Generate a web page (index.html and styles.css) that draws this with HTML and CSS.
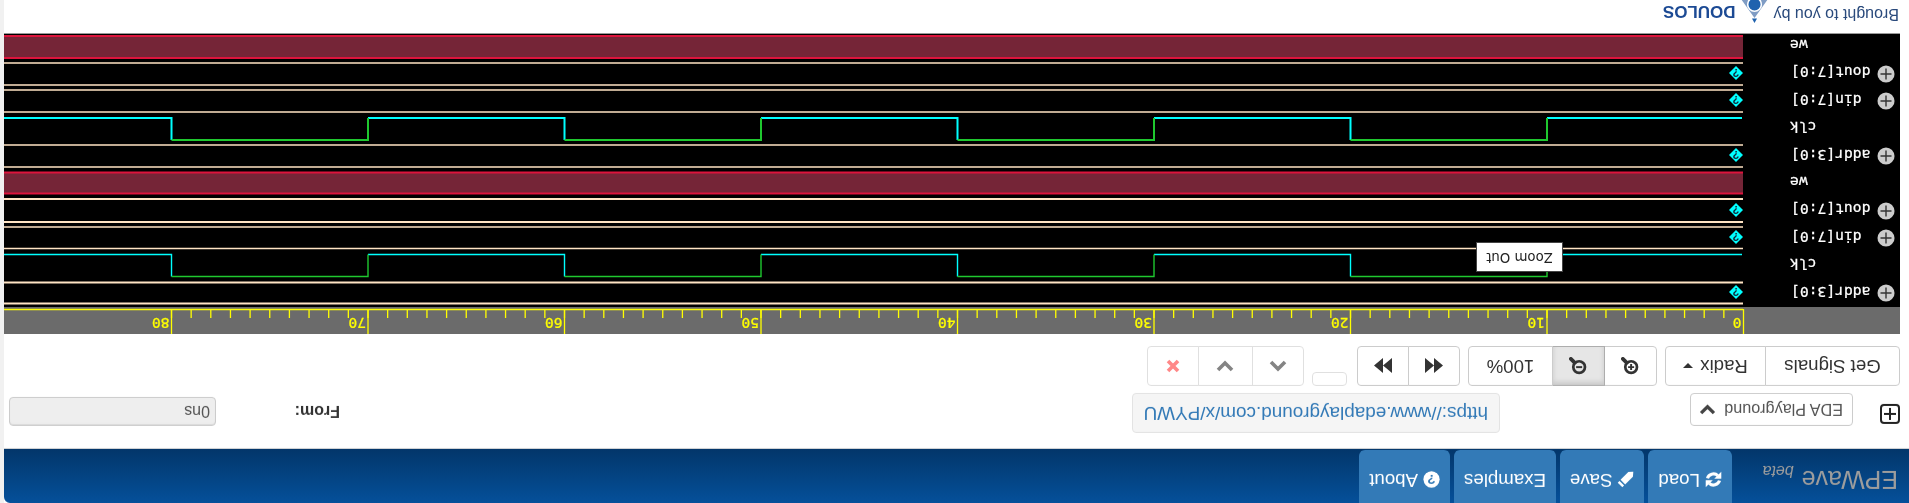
FILE: index.html
```html
<!DOCTYPE html>
<html lang="en">
<head>
<meta charset="utf-8">
<title>EPWave</title>
<link rel="stylesheet" href="styles.css">
</head>
<body>
<div class="page">
  <div class="main">
    <nav class="navbar">
      <div class="brand">EPWave <span class="beta">beta</span></div>
      <div class="navbtns">
        <a class="navbtn"><svg class="navicon" viewBox="0 0 24 24"><path class="ref" d="M3.5 10.5A8.8 8.8 0 0 1 18 6.5M20.5 13.5A8.8 8.8 0 0 1 6 17.5"/><path class="fillw" d="M23 1v10H13zM1 23V13h10z"/></svg>Load</a>
        <a class="navbtn"><svg class="navicon" viewBox="0 0 24 24"><path class="fillw" d="M16.5 1 23 7.5 20.5 10 14 3.5ZM12.5 5 19 11.5 8 22.5 1 23 1.5 16Z"/></svg>Save</a>
        <a class="navbtn">Examples</a>
        <a class="navbtn"><svg class="navicon" viewBox="0 0 24 24"><circle class="fillw" cx="12" cy="12" r="11.5"/><text class="qmark" x="12" y="19">?</text></svg>About</a>
      </div>
    </nav>
    <div class="content">
      <div class="metarow">
        <svg class="plusbox" viewBox="0 0 20 20"><rect class="plusrect" x="1" y="1" width="18" height="18" rx="3"/><path class="plusline" d="M10 4v12M4 10h12"/></svg>
        <button class="edabtn">EDA Playground<svg class="edachev" viewBox="0 0 18 12"><path d="M2 2l7 7 7-7"/></svg></button>
        <div class="urlbox"><a class="url">https://www.edaplayground.com/x/PYWU</a></div>
        <label class="fromlabel">From:</label>
        <input class="frominput" value="0ns" readonly>
      </div>
      <div class="toolbar">
        <div class="group">
          <button class="btn w135">Get Signals</button>
          <button class="btn w101">Radix<span class="caret"></span></button>
        </div>
        <div class="group gap8">
          <button class="btn w53"><svg class="zoomicon" viewBox="0 0 24 24"><circle cx="10.5" cy="10.5" r="7.8"/><path class="handle" d="M16.5 16.5l5 5"/><path class="thin" d="M10.5 6.5v8M6.5 10.5h8"/></svg></button>
          <button class="btn w53 active"><svg class="zoomicon" viewBox="0 0 24 24"><circle cx="10.5" cy="10.5" r="7.8"/><path class="handle" d="M16.5 16.5l5 5"/><path class="thin" d="M6.5 10.5h8"/></svg></button>
          <button class="btn w85">100%</button>
        </div>
        <div class="group gap8">
          <button class="btn w52"><svg class="ffw" viewBox="0 0 17 14"><path d="M0 7 8.5 0V14ZM8.5 7 17 0V14Z"/></svg></button>
          <button class="btn w52"><svg class="ffw" viewBox="0 0 17 14"><path d="M17 7 8.5 0V14ZM8.5 7 0 0V14Z"/></svg></button>
        </div>
        <button class="btn emptybtn" disabled></button>
        <div class="group gap8 disabled">
          <button class="btn w52"><svg class="chev" viewBox="0 0 18 12"><path d="M2 10l7-7 7 7"/></svg></button>
          <button class="btn w55"><svg class="chev" viewBox="0 0 18 12"><path d="M2 2l7 7 7-7"/></svg></button>
          <button class="btn w52"><svg class="cross" viewBox="0 0 14 14"><path d="M2 2l10 10M12 2L2 12"/></svg></button>
        </div>
      </div>
      <div class="wavepanel">
        <svg class="wave" viewBox="9 169 1896 300">
          <rect class="bg" x="9" y="169" width="1896" height="300"/>
          <rect class="ruler" x="9" y="169" width="1896" height="27"/>
          <path class="rline" d="M166 193.5H1905"/>
          <path class="rline" d="M165.5 169V194M362 169V194M558.5 169V194M755 169V194M951.5 169V194M1148 169V194M1344.5 169V194M1541 169V194M1737.5 169V194"/>
          <path class="rline" d="M185.15 185v9m19.65-9v9m19.65-9v9m19.65-9v9m19.65-9v9m19.65-9v9m19.65-9v9m19.65-9v9m19.65-9v9m19.65-9v9m19.65-9v9m19.65-9v9m19.65-9v9m19.65-9v9m19.65-9v9m19.65-9v9m19.65-9v9m19.65-9v9m19.65-9v9m19.65-9v9m19.65-9v9m19.65-9v9m19.65-9v9m19.65-9v9m19.65-9v9m19.65-9v9m19.65-9v9m19.65-9v9m19.65-9v9m19.65-9v9m19.65-9v9m19.65-9v9m19.65-9v9m19.65-9v9m19.65-9v9m19.65-9v9m19.65-9v9m19.65-9v9m19.65-9v9m19.65-9v9m19.65-9v9m19.65-9v9m19.65-9v9m19.65-9v9m19.65-9v9m19.65-9v9m19.65-9v9m19.65-9v9m19.65-9v9m19.65-9v9m19.65-9v9m19.65-9v9m19.65-9v9m19.65-9v9m19.65-9v9m19.65-9v9m19.65-9v9m19.65-9v9m19.65-9v9m19.65-9v9m19.65-9v9m19.65-9v9m19.65-9v9m19.65-9v9m19.65-9v9m19.65-9v9m19.65-9v9m19.65-9v9m19.65-9v9m19.65-9v9m19.65-9v9m19.65-9v9m19.65-9v9m19.65-9v9m19.65-9v9m19.65-9v9m19.65-9v9m19.65-9v9m19.65-9v9m19.65-9v9"/>
          <g class="rtext">
            <text x="167.5" y="185">0</text><text x="364" y="185">10</text><text x="560.5" y="185">20</text><text x="757" y="185">30</text><text x="953.5" y="185">40</text><text x="1150" y="185">50</text><text x="1346.5" y="185">60</text><text x="1543" y="185">70</text><text x="1739.5" y="185">80</text>
          </g>

          <path class="bus thick" d="M166 199.5H1905M166 220.5H1905M166 281H1905M166 304H1905"/>
          <path class="bus" d="M166 254.5H1905M166 276H1905M166 336H1905M166 358H1905M166 391H1905M166 413H1905M166 418H1905M166 440H1905"/>

          <path class="clk0 thin1" d="M167 248.5H362M558.5 226.5V248.5H755M951.5 226.5V248.5H1148M1344.5 226.5V248.5H1541M1737.5 226.5V248.5H1905"/>
          <path class="clk1 thin1" d="M362 248.5V226.5H558.5M755 248.5V226.5H951.5M1148 248.5V226.5H1344.5M1541 248.5V226.5H1737.5"/>
          <path class="clk0" d="M167 385H362M558.5 363V385H755M951.5 363V385H1148M1344.5 363V385H1541M1737.5 363V385H1905"/>
          <path class="clk1" d="M362 385V363H558.5M755 385V363H951.5M1148 385V363H1344.5M1541 385V363H1737.5"/>

          <rect class="wefill" x="166" y="309.5" width="1739" height="21"/>
          <path class="weline" d="M166 309.5H1905M166 330.5H1905"/>
          <rect class="wefill" x="166" y="445" width="1739" height="22"/>
          <path class="weline" d="M166 445H1905M166 467H1905"/>

          <g class="dots">
            <polygon points="173,204 180,211 173,218 166,211"/><polygon points="173,259 180,266 173,273 166,266"/><polygon points="173,286 180,293 173,300 166,293"/><polygon points="173,341 180,348 173,355 166,348"/><polygon points="173,396 180,403 173,410 166,403"/><polygon points="173,423 180,430 173,437 166,430"/>
          </g>
          <g class="dottext">
            <text x="173" y="215">?</text><text x="173" y="270">?</text><text x="173" y="297">?</text><text x="173" y="352">?</text><text x="173" y="407">?</text><text x="173" y="434">?</text>
          </g>

          <g class="expand">
            <circle cx="23" cy="210" r="8.5"/><circle cx="23" cy="265" r="8.5"/><circle cx="23" cy="292" r="8.5"/><circle cx="23" cy="347" r="8.5"/><circle cx="23" cy="402" r="8.5"/><circle cx="23" cy="429" r="8.5"/>
            <path d="M17.5 210h11M23 204.5v11M17.5 265h11M23 259.5v11M17.5 292h11M23 286.5v11M17.5 347h11M23 341.5v11M17.5 402h11M23 396.5v11M17.5 429h11M23 423.5v11"/>
          </g>
          <g class="names">
            <text x="118" y="216">addr[3:0]</text>
            <text x="119" y="243.5">clk</text>
            <text x="118" y="271">din[7:0]</text>
            <text x="118" y="298.5">dout[7:0]</text>
            <text x="119" y="326">we</text>
            <text x="118" y="353">addr[3:0]</text>
            <text x="119" y="380.5">clk</text>
            <text x="118" y="408">din[7:0]</text>
            <text x="118" y="435.5">dout[7:0]</text>
            <text x="119" y="463">we</text>
          </g>
        </svg>
        <div class="tooltip">Zoom Out</div>
      </div>
      <footer class="footer">
        <span class="brought">Brought to you by</span>
        <svg class="logomark" viewBox="0 0 27 24"><path class="lm0" d="M13.5 0 16 4.5H11Z"/><path class="lm1" d="M13.5 5 27 24H21L13.5 12 6 24H0Z"/><circle class="lm2" cx="13.5" cy="18.5" r="6.8"/></svg>
        <span class="doulos">DOULOS</span>
      </footer>
    </div>
  </div>
  <div class="gutter"></div>
</div>
</body>
</html>
```
FILE: styles.css
```css
html, body {
  margin: 0;
  padding: 0;
  background: #fff;
  overflow: hidden;
}
.page {
  width: 1909px;
  height: 503px;
  display: flex;
  overflow: hidden;
  transform: rotate(180deg);
  font-family: "Liberation Sans", Arial, sans-serif;
  color: #333;
}
.main {
  width: 1905px;
  flex: none;
}
.gutter {
  width: 4px;
  flex: none;
  background: #f1f1f1;
}
.navbar {
  height: 54px;
  display: flex;
  background: linear-gradient(#05509a, #03366a);
  border-top-right-radius: 6px;
  box-shadow: 0 1px 0 #ddd;
}
.brand {
  width: 177px;
  flex: none;
  box-sizing: border-box;
  padding: 9px 0 0 11px;
  font-size: 25px;
  line-height: 28px;
  color: #9d9d9d;
  white-space: nowrap;
}
.beta {
  font-size: 16px;
  font-style: italic;
  vertical-align: -5px;
  margin-left: 1px;
}
.navbtns {
  display: flex;
  gap: 4px;
}
.navbtn {
  height: 53px;
  box-sizing: border-box;
  padding: 12px 10px 0;
  background: #337ab7;
  border-radius: 0 0 6px 6px;
  color: #fff;
  font-size: 18.67px;
  line-height: 22px;
  display: flex;
  align-items: flex-start;
}
.navicon {
  width: 17px;
  height: 17px;
  margin: 3px 5px 0 0;
  flex: none;
}
.ref {
  fill: none;
  stroke: #fff;
  stroke-width: 4.4;
}
.fillw {
  fill: #fff;
}
.qmark {
  fill: #337ab7;
  font-size: 19px;
  font-weight: 700;
  text-anchor: middle;
}
.content {
  padding-left: 9px;
}
.metarow {
  height: 40px;
  margin-top: 16px;
  display: flex;
  align-items: flex-end;
}
.plusbox {
  width: 20px;
  height: 20px;
  flex: none;
  margin-bottom: 11px;
}
.plusrect {
  fill: #fff;
  stroke: #222;
  stroke-width: 2;
}
.plusline {
  stroke: #222;
  stroke-width: 2;
}
.edabtn {
  width: 163px;
  height: 33px;
  margin-left: 27px;
  box-sizing: border-box;
  padding: 0 0 0 9px;
  display: flex;
  align-items: center;
  background: #fff;
  border: 1px solid #ccc;
  border-radius: 4px;
  font: 16.2px "Liberation Sans", Arial, sans-serif;
  color: #555;
  white-space: nowrap;
}
.edachev {
  width: 17px;
  height: 11px;
  margin-left: 8px;
  flex: none;
}
.edachev path {
  fill: none;
  stroke: #444;
  stroke-width: 3.6;
}
.urlbox {
  width: 368px;
  height: 40px;
  margin-left: 190px;
  box-sizing: border-box;
  padding: 0 0 0 11px;
  background: #f5f5f5;
  border: 1px solid #e3e3e3;
  border-radius: 4px;
  font-size: 18.9px;
  line-height: 38px;
  white-space: nowrap;
}
.url {
  color: #337ab7;
}
.fromlabel {
  margin: 0 0 9px 792px;
  font-size: 16px;
  line-height: 18px;
  font-weight: 700;
  width: 45px;
  flex: none;
}
.frominput {
  width: 207px;
  height: 29px;
  margin: 0 0 4px 79px;
  box-sizing: border-box;
  padding: 0 5px;
  background: #eee;
  border: 1px solid #ccc;
  border-radius: 4px;
  box-shadow: inset 0 1px 1px rgba(0, 0, 0, .075);
  font: 16px "Liberation Sans", Arial, sans-serif;
  color: #555;
  outline: none;
}
.toolbar {
  height: 40px;
  margin-top: 7px;
  display: flex;
  align-items: flex-start;
}
.group {
  display: flex;
}
.gap8 {
  margin-left: 8px;
}
.disabled {
  opacity: .6;
}
.btn {
  height: 40px;
  box-sizing: border-box;
  padding: 0;
  display: flex;
  align-items: center;
  justify-content: center;
  background: #fff;
  border: 1px solid #ccc;
  margin-left: -1px;
  font: 18.67px "Liberation Sans", Arial, sans-serif;
  color: #333;
  white-space: nowrap;
}
.group .btn:first-child {
  margin-left: 0;
  border-radius: 4px 0 0 4px;
}
.group .btn:last-child {
  border-radius: 0 4px 4px 0;
}
.w135 {
  width: 135px;
}
.w101 {
  width: 101px;
}
.w53 {
  width: 53px;
}
.w52 {
  width: 52px;
}
.w55 {
  width: 55px;
}
.w85 {
  width: 85px;
}
.active {
  background: #e6e6e6;
  border-color: #adadad;
  box-shadow: inset 0 3px 5px rgba(0, 0, 0, .125);
}
.caret {
  width: 0;
  height: 0;
  margin-left: 7px;
  border-left: 5px solid transparent;
  border-right: 5px solid transparent;
  border-top: 5px solid #333;
}
.zoomicon {
  width: 18px;
  height: 18px;
  fill: none;
  stroke: #333;
  stroke-width: 3.6;
}
.handle {
  stroke-width: 5;
  stroke-linecap: round;
}
.thin {
  stroke-width: 2.6;
}
.ffw {
  width: 18px;
  height: 15px;
  fill: #333;
}
.emptybtn {
  width: 35px;
  height: 14px;
  margin-left: 10px;
  border-radius: 4px;
  opacity: .6;
}
.chev {
  width: 18px;
  height: 12px;
  fill: none;
  stroke: #333;
  stroke-width: 3.6;
}
.cross {
  width: 14px;
  height: 14px;
  fill: none;
  stroke: #ff3a3a;
  stroke-width: 3.6;
}
.wavepanel {
  position: relative;
  margin-top: 12px;
  width: 1896px;
  height: 300px;
}
.wave {
  display: block;
  width: 1896px;
  height: 300px;
}
.bg {
  fill: #000;
}
.ruler {
  fill: #6b6b6b;
}
.rline {
  fill: none;
  stroke: #ff0;
  stroke-width: 1.3;
}
.rtext text {
  fill: #ff0;
  stroke: #ff0;
  stroke-width: .25;
  font: 14.67px "DejaVu Sans Mono", monospace;
}
.bus {
  fill: none;
  stroke: #ffe4c4;
  stroke-width: 1.5;
}
.bus.thick {
  stroke-width: 2;
}
.clk0,
.clk1 {
  fill: none;
  stroke-width: 2;
}
.clk0 {
  stroke: #0ff;
}
.clk1 {
  stroke: #1fc82f;
}
.thin1 {
  stroke-width: 1.4;
}
.wefill {
  fill: #752537;
}
.weline {
  fill: none;
  stroke: #dc143c;
  stroke-width: 1.8;
}
.dots {
  fill: #0ff;
}
.dottext text {
  fill: #123;
  font: 700 11px "Liberation Sans", sans-serif;
  text-anchor: middle;
}
.expand circle {
  fill: #ccc;
}
.expand path {
  stroke: #333;
  stroke-width: 1.4;
}
.names text {
  fill: #fff;
  stroke: #fff;
  stroke-width: .25;
  font: 14.67px "DejaVu Sans Mono", monospace;
  text-anchor: end;
}
.tooltip {
  position: absolute;
  left: 337px;
  top: 62px;
  width: 87px;
  height: 30px;
  box-sizing: border-box;
  background: #fff;
  border: 1px solid #444;
  font: 13.3px/28px "DejaVu Sans", sans-serif;
  color: #222;
  text-align: center;
}
.footer {
  height: 33px;
  border-top: 1px solid #999;
  display: flex;
  align-items: center;
  padding-left: 1px;
  overflow: hidden;
}
.brought {
  font-size: 16px;
  color: #2a4a7c;
  white-space: nowrap;
  margin-top: 5px;
}
.logomark {
  width: 27px;
  height: 24px;
  flex: none;
  margin: 10px 0 0 6px;
}
.lm0 {
  fill: #1f62ae;
}
.lm1 {
  fill: #7f9cc4;
}
.lm2 {
  fill: #1f62ae;
  stroke: #fff;
  stroke-width: 1.5;
}
.doulos {
  margin: 11px 0 0 5px;
  font-size: 17px;
  font-weight: 700;
  color: #1c4a94;
}
```
